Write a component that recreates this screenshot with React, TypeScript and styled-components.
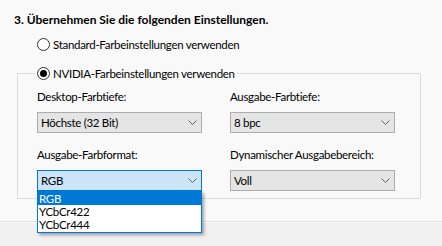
import { createGlobalStyle } from "styled-components";
import styled from "styled-components";

const Global = createGlobalStyle`
  html, body {
    margin: 0;
    padding: 0;
    background: #f9f9f9;
  }
  body {
    font-family: Lato, "Noto Sans", sans-serif;
    font-size: 11.5px;
    letter-spacing: -0.3px;
    color: #000;
  }
`;

const Page = styled.div`
  width: 442px;
  height: 246px;
  display: flex;
  flex-direction: column;
  overflow: hidden;
`;

const Content = styled.div`
  height: 221px;
  padding: 11px 0 0 14px;
  box-sizing: border-box;
`;

const Title = styled.div`
  font-weight: 700;
  font-size: 12px;
  letter-spacing: 0;
  line-height: 17px;
  margin-bottom: 8px;
`;

const RadioRow = styled.label`
  display: flex;
  align-items: center;
  gap: 3px;
  height: 17px;
  line-height: 17px;
  white-space: nowrap;
`;

const Circle = styled.span<{ $checked?: boolean }>`
  width: 13px;
  height: 13px;
  box-sizing: border-box;
  border: 1px solid #333;
  border-radius: 50%;
  background: #fff;
  display: flex;
  align-items: center;
  justify-content: center;
  &::after {
    content: "";
    width: 7px;
    height: 7px;
    border-radius: 50%;
    background: ${(p) => (p.$checked ? "#000" : "transparent")};
  }
`;

const Group = styled.fieldset`
  margin: 12px 0 0 3px;
  width: 404px;
  height: 134px;
  box-sizing: border-box;
  border: 1px solid #dcdcdc;
  padding: 6px 0 0 19px;
  position: relative;
`;

const Legend = styled.legend`
  padding: 0 2px;
  margin-left: -2px;
`;

const Grid = styled.div`
  display: grid;
  grid-template-columns: 165px 165px;
  column-gap: 28px;
  row-gap: 13px;
`;

const Field = styled.div`
  display: flex;
  flex-direction: column;
  gap: 7px;
  position: relative;
`;

const Label = styled.div`
  line-height: 17px;
  white-space: nowrap;
`;

const Combo = styled.div<{ $focused?: boolean }>`
  height: 21px;
  box-sizing: border-box;
  border: 1px solid ${(p) => (p.$focused ? "#0078d7" : "#adadad")};
  background: ${(p) => (p.$focused ? "#cce4f7" : "#e5e5e5")};
  display: flex;
  align-items: center;
  justify-content: space-between;
  padding: 0 4px 0 3px;
  line-height: 17px;
`;

const Chevron = () => (
  <svg width="9" height="5" viewBox="0 0 9 5">
    <path d="M0.5 0.5 L4.5 4.5 L8.5 0.5" fill="none" stroke="#606060" strokeWidth="1" />
  </svg>
);

const List = styled.div`
  position: absolute;
  left: 0;
  top: 100%;
  width: 165px;
  box-sizing: border-box;
  border: 1px solid #0078d7;
  padding-bottom: 1px;
  background: #fff;
  box-shadow: 2px 2px 3px rgba(0, 0, 0, 0.35);
  z-index: 2;
`;

const Item = styled.div<{ $active?: boolean }>`
  height: 13px;
  line-height: 13px;
  padding-left: 1px;
  background: ${(p) => (p.$active ? "#0078d7" : "#fff")};
  color: ${(p) => (p.$active ? "#fff" : "#000")};
`;

const Footer = styled.div`
  flex: 1;
  border-top: 1px solid #e2e2e2;
  box-shadow: inset 0 1px 0 #fdfdfd;
  background: #f0f0f0;
`;

function Select(props: { value: string; focused?: boolean; options?: string[] }) {
  return (
    <>
      <Combo $focused={props.focused}>
        <span>{props.value}</span>
        <Chevron />
      </Combo>
      {props.options && (
        <List>
          {props.options.map((o) => (
            <Item key={o} $active={o === props.value}>
              {o}
            </Item>
          ))}
        </List>
      )}
    </>
  );
}

export default function App() {
  return (
    <Page>
      <Global />
      <Content>
        <Title>3. Übernehmen Sie die folgenden Einstellungen.</Title>
        <RadioRow style={{ marginLeft: 23 }}>
          <Circle />
          Standard-Farbeinstellungen verwenden
        </RadioRow>
        <Group>
          <Legend>
            <RadioRow>
              <Circle $checked />
              NVIDIA-Farbeinstellungen verwenden
            </RadioRow>
          </Legend>
          <Grid>
            <Field>
              <Label>Desktop-Farbtiefe:</Label>
              <Select value="Höchste (32 Bit)" />
            </Field>
            <Field>
              <Label>Ausgabe-Farbtiefe:</Label>
              <Select value="8 bpc" />
            </Field>
            <Field>
              <Label>Ausgabe-Farbformat:</Label>
              <Select value="RGB" focused options={["RGB", "YCbCr422", "YCbCr444"]} />
            </Field>
            <Field>
              <Label>Dynamischer Ausgabebereich:</Label>
              <Select value="Voll" />
            </Field>
          </Grid>
        </Group>
      </Content>
      <Footer />
    </Page>
  );
}
